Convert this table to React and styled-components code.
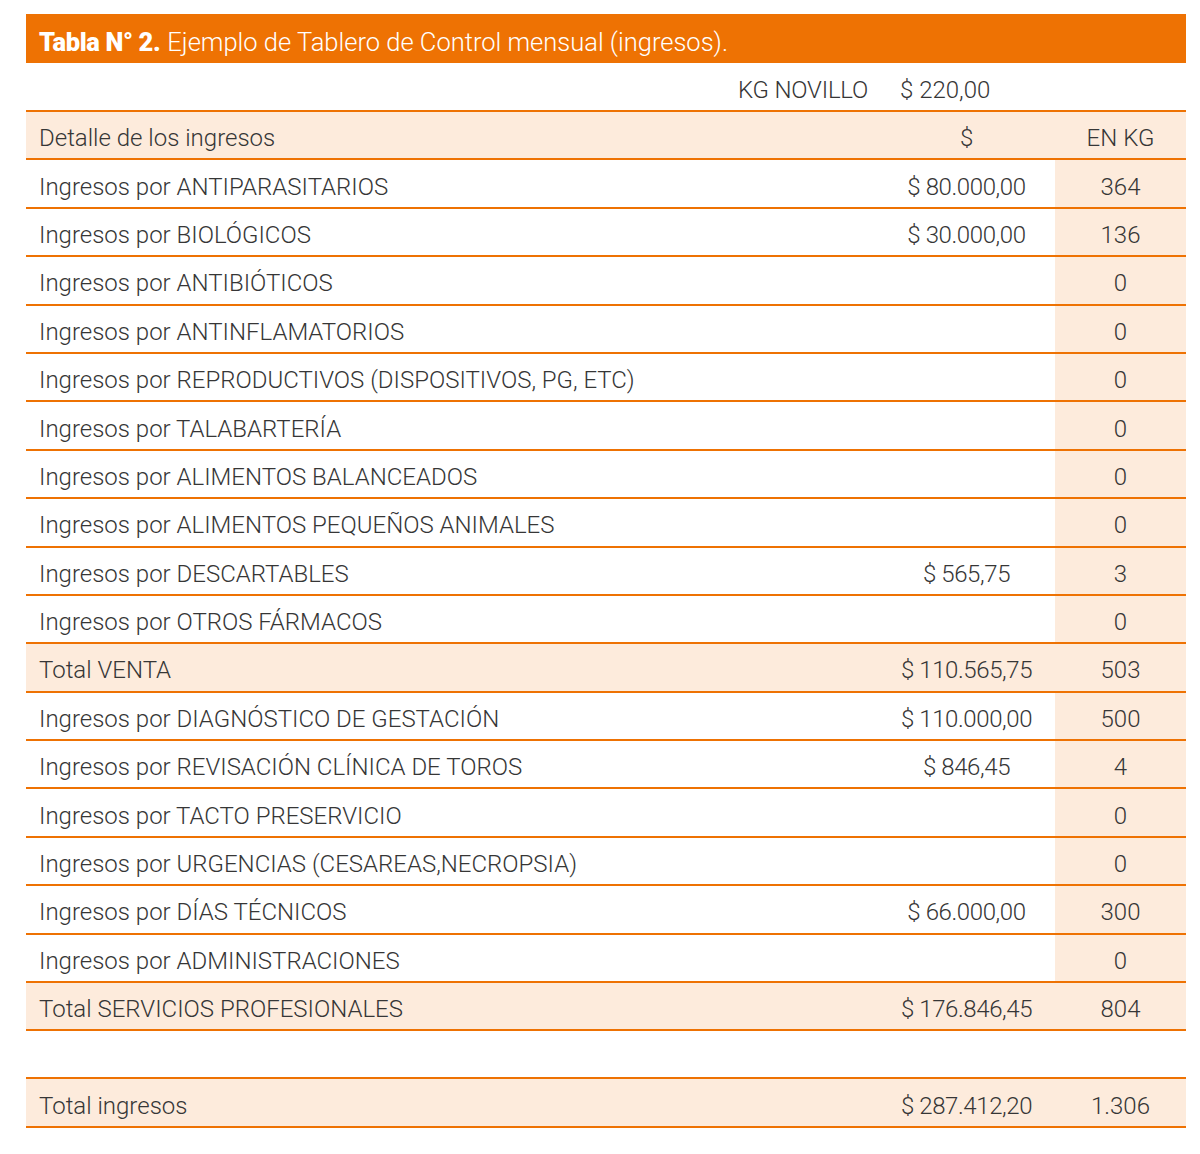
import React from "react";
import styled, { createGlobalStyle } from "styled-components";

const rows = [
  { label: "Ingresos por ANTIPARASITARIOS", money: "$ 80.000,00", kg: "364" },
  { label: "Ingresos por BIOLÓGICOS", money: "$ 30.000,00", kg: "136" },
  { label: "Ingresos por ANTIBIÓTICOS", money: "", kg: "0" },
  { label: "Ingresos por ANTINFLAMATORIOS", money: "", kg: "0" },
  { label: "Ingresos por REPRODUCTIVOS (DISPOSITIVOS, PG, ETC)", money: "", kg: "0" },
  { label: "Ingresos por TALABARTERÍA", money: "", kg: "0" },
  { label: "Ingresos por ALIMENTOS BALANCEADOS", money: "", kg: "0" },
  { label: "Ingresos por ALIMENTOS PEQUEÑOS ANIMALES", money: "", kg: "0" },
  { label: "Ingresos por DESCARTABLES", money: "$ 565,75", kg: "3" },
  { label: "Ingresos por OTROS FÁRMACOS", money: "", kg: "0" },
  { label: "Total VENTA", money: "$ 110.565,75", kg: "503", total: true },
  { label: "Ingresos por DIAGNÓSTICO DE GESTACIÓN", money: "$ 110.000,00", kg: "500" },
  { label: "Ingresos por REVISACIÓN CLÍNICA DE TOROS", money: "$ 846,45", kg: "4" },
  { label: "Ingresos por TACTO PRESERVICIO", money: "", kg: "0" },
  { label: "Ingresos por URGENCIAS (CESAREAS,NECROPSIA)", money: "", kg: "0" },
  { label: "Ingresos por DÍAS TÉCNICOS", money: "$ 66.000,00", kg: "300" },
  { label: "Ingresos por ADMINISTRACIONES", money: "", kg: "0" },
  { label: "Total SERVICIOS PROFESIONALES", money: "$ 176.846,45", kg: "804", total: true },
];

const App = () => {
  return (
    <>
      <GlobalStyle />
      <Wrapper>
        <TitleBar>
          <strong>Tabla N° 2.</strong> Ejemplo de Tablero de Control mensual (ingresos).
        </TitleBar>
        <PriceRow>
          <PriceLabel>KG NOVILLO</PriceLabel>
          <PriceValue>$ 220,00</PriceValue>
        </PriceRow>
        <Row $fill $top>
          <Label>Detalle de los ingresos</Label>
          <Money>$</Money>
          <Kg>EN KG</Kg>
        </Row>
        {rows.map((r) => (
          <Row key={r.label} $fill={r.total}>
            <Label>{r.label}</Label>
            <Money>{r.money}</Money>
            <Kg>{r.kg}</Kg>
          </Row>
        ))}
        <Spacer />
        <Row $fill $top>
          <Label>Total ingresos</Label>
          <Money>$ 287.412,20</Money>
          <Kg $plain>1.306</Kg>
        </Row>
      </Wrapper>
    </>
  );
};

const GlobalStyle = createGlobalStyle`
  body {
    margin: 0;
    background: #ffffff;
    font-family: "Roboto", "Noto Sans", sans-serif;
    color: #363636;
  }
`;

const Wrapper = styled.div`
  width: 1160px;
  margin: 14px 14px 0 26px;
  display: flex;
  flex-direction: column;
`;

const TitleBar = styled.div`
  height: 49px;
  background: #ee7203;
  color: #ffffff;
  font-size: 25.5px;
  font-weight: 300;
  display: flex;
  align-items: center;
  gap: 7px;
  padding: 6px 0 0 13px;
  box-sizing: border-box;
  white-space: nowrap;

  strong {
    font-weight: 900;
    letter-spacing: -0.4px;
  }
`;

const PriceRow = styled.div`
  height: 47px;
  display: flex;
  align-items: center;
  padding: 7px 0 0 712px;
  box-sizing: border-box;
  font-size: 24px;
  font-weight: 300;
`;

const PriceLabel = styled.span`
  width: 162px;
  letter-spacing: -0.2px;
`;

const PriceValue = styled.span``;

const Row = styled.div`
  display: grid;
  grid-template-columns: 1fr 177px 131px;
  height: ${({ $top }) => ($top ? "50.4px" : "48.4px")};
  box-sizing: border-box;
  border-bottom: 2px solid #ee7203;
  border-top: ${({ $top }) => ($top ? "2px solid #ee7203" : "none")};
  background: ${({ $fill }) => ($fill ? "#fdebdc" : "#ffffff")};
  font-size: 24px;
  font-weight: 300;
`;

const Cell = styled.div`
  display: flex;
  align-items: center;
  padding-top: 6px;
  white-space: nowrap;
`;

const Label = styled(Cell)`
  padding-left: 13px;
`;

const Money = styled(Cell)`
  justify-content: center;
  letter-spacing: -0.4px;
`;

const Kg = styled(Cell)`
  justify-content: center;
  background: ${({ $plain }) => ($plain ? "transparent" : "#fdebdc")};
`;

const Spacer = styled.div`
  height: 46px;
`;

export default App;
